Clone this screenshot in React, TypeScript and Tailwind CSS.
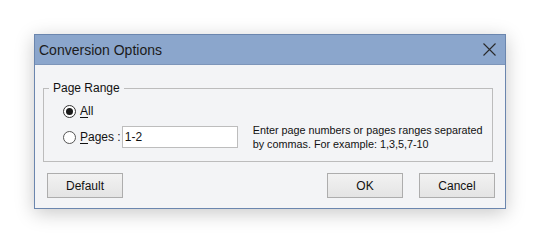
import React from "react";

function Radio({ checked }: { checked: boolean }) {
  return (
    <svg width="13" height="13" viewBox="0 0 13 13" className="shrink-0">
      <circle cx="6.5" cy="6.5" r="6" fill="#ffffff" stroke={checked ? "#333333" : "#555555"} strokeWidth="1" />
      {checked && <circle cx="6.5" cy="6.5" r="3.5" fill="#1a1a1a" />}
    </svg>
  );
}

function Btn({ label }: { label: string }) {
  return (
    <div className="w-[76px] h-[25px] flex items-center justify-center border border-[#adadad] bg-gradient-to-b from-[#f2f2f2] to-[#e4e4e4] text-[12px] text-[#111]">
      {label}
    </div>
  );
}

export default function App() {
  return (
    <div
      className="w-[540px] h-[243px] bg-white pt-[34px] pl-[34px]"
      style={{ fontFamily: '"Liberation Sans", Arial, sans-serif' }}
    >
      <div className="w-[472px] h-[175px] border border-[#6b86ae] flex flex-col shadow-[0_4px_18px_rgba(0,0,0,0.22)] bg-[#f3f4f6]">
        <div className="h-[30px] shrink-0 bg-[#8ba6cc] flex items-center justify-between pl-[4px] pr-[9px] border-b border-[#7d95b9]">
          <span className="text-[14px] text-[#1b1b1b] leading-none">Conversion Options</span>
          <svg width="13" height="13" viewBox="0 0 13 13">
            <path d="M0.5 0.5 L12.5 12.5 M12.5 0.5 L0.5 12.5" stroke="#2a2a2a" strokeWidth="1.1" fill="none" />
          </svg>
        </div>
        <div className="flex-1 flex flex-col pl-[8px] pr-[10px]">
          <fieldset className="mt-[16px] mr-[2px] border border-[#bcbcbc] pb-[13px] flex flex-col">
            <legend className="ml-[5px] px-[4px] text-[12px] leading-[14px] text-[#111]">Page Range</legend>
            <div className="flex flex-col gap-[5px] pt-[6px] pl-[19px]">
              <div className="h-[20px] flex items-center gap-[4px]">
                <Radio checked />
                <span className="text-[12px] text-[#111]">
                  <span className="underline underline-offset-2">A</span>ll
                </span>
              </div>
              <div className="h-[22px] flex items-center">
                <Radio checked={false} />
                <span className="ml-[4px] text-[12px] text-[#111]">
                  <span className="underline underline-offset-2">P</span>ages :
                </span>
                <div className="ml-[1px] w-[116px] h-[22px] bg-white border border-[#bdbdbd] flex items-center pl-[2px] text-[12px] text-[#111]">
                  1-2
                </div>
                <div className="ml-[15px] text-[10.8px] leading-[14px] text-[#111]">
                  Enter page numbers or pages ranges separated
                  <br />
                  by commas. For example: 1,3,5,7-10
                </div>
              </div>
            </div>
          </fieldset>
          <div className="mt-[11px] flex items-center pl-[4px]">
            <Btn label="Default" />
            <div className="flex-1" />
            <Btn label="OK" />
            <div className="w-[16px]" />
            <Btn label="Cancel" />
          </div>
        </div>
      </div>
    </div>
  );
}
